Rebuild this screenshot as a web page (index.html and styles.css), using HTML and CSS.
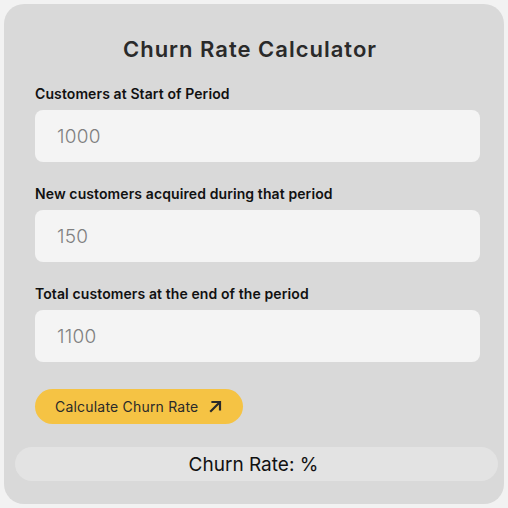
FILE: index.html
```
<!DOCTYPE html>
<html lang="en">
<head>
<meta charset="utf-8">
<title>Churn Rate Calculator</title>
<link rel="stylesheet" href="styles.css">
</head>
<body>
<div class="card">
  <h1 class="title">Churn Rate Calculator</h1>
  <div class="form">
    <div class="field">
      <label class="label">Customers at Start of Period</label>
      <div class="input">1000</div>
    </div>
    <div class="field">
      <label class="label">New customers acquired during that period</label>
      <div class="input">150</div>
    </div>
    <div class="field">
      <label class="label">Total customers at the end of the period</label>
      <div class="input">1100</div>
    </div>
    <button class="btn">Calculate Churn Rate
      <svg class="arrow" width="13" height="13" viewBox="0 0 13 13" fill="none" stroke="#2a2a2a" stroke-width="2.2" stroke-linecap="square"><path d="M2 11L10.5 2.5M3.5 2H11V9.5"/></svg>
    </button>
  </div>
  <div class="result">Churn Rate: %</div>
</div>
</body>
</html>
```
FILE: styles.css
```
* { box-sizing: border-box; }
html, body { margin: 0; padding: 0; }
body {
  background: #f2f2f2;
  padding: 4px;
  font-family: Inter, "Noto Sans", sans-serif;
}
.card {
  width: 500px;
  height: 500px;
  background: #d9d9d9;
  border-radius: 20px;
  padding: 31px 6px 0 11px;
  display: flex;
  flex-direction: column;
}
.title {
  margin: 0 13px 0 0;
  font-size: 22px;
  line-height: 28px;
  font-weight: 600;
  letter-spacing: 1px;
  color: #2a2a2a;
  text-align: center;
}
.form {
  padding: 22px 18px 0 20px;
  display: flex;
  flex-direction: column;
  align-items: flex-start;
}
.field {
  width: 100%;
  display: flex;
  flex-direction: column;
  gap: 7px;
  margin-bottom: 23px;
}
.field:last-of-type { margin-bottom: 27px; }
.label {
  font-size: 14px;
  line-height: 18px;
  font-weight: 600;
  letter-spacing: 0.1px;
  color: #111;
}
.input {
  height: 52px;
  background: #f4f4f4;
  border-radius: 8px;
  padding-left: 22px;
  display: flex;
  align-items: center;
  font-size: 19px;
  font-weight: 300;
  letter-spacing: 0.3px;
  color: #808080;
}
.btn {
  height: 35px;
  border: none;
  border-radius: 18px;
  background: #f5c344;
  padding: 0 21px 0 20px;
  display: flex;
  align-items: center;
  gap: 11px;
  font-family: inherit;
  font-size: 14px;
  font-weight: 400;
  letter-spacing: 0.2px;
  color: #2a2a2a;
}
.arrow { display: block; }
.result {
  margin-top: 23px;
  height: 34px;
  background: #e3e3e3;
  border-radius: 17px;
  padding-right: 6px;
  display: flex;
  align-items: center;
  justify-content: center;
  font-size: 19px;
  color: #111;
}
```
